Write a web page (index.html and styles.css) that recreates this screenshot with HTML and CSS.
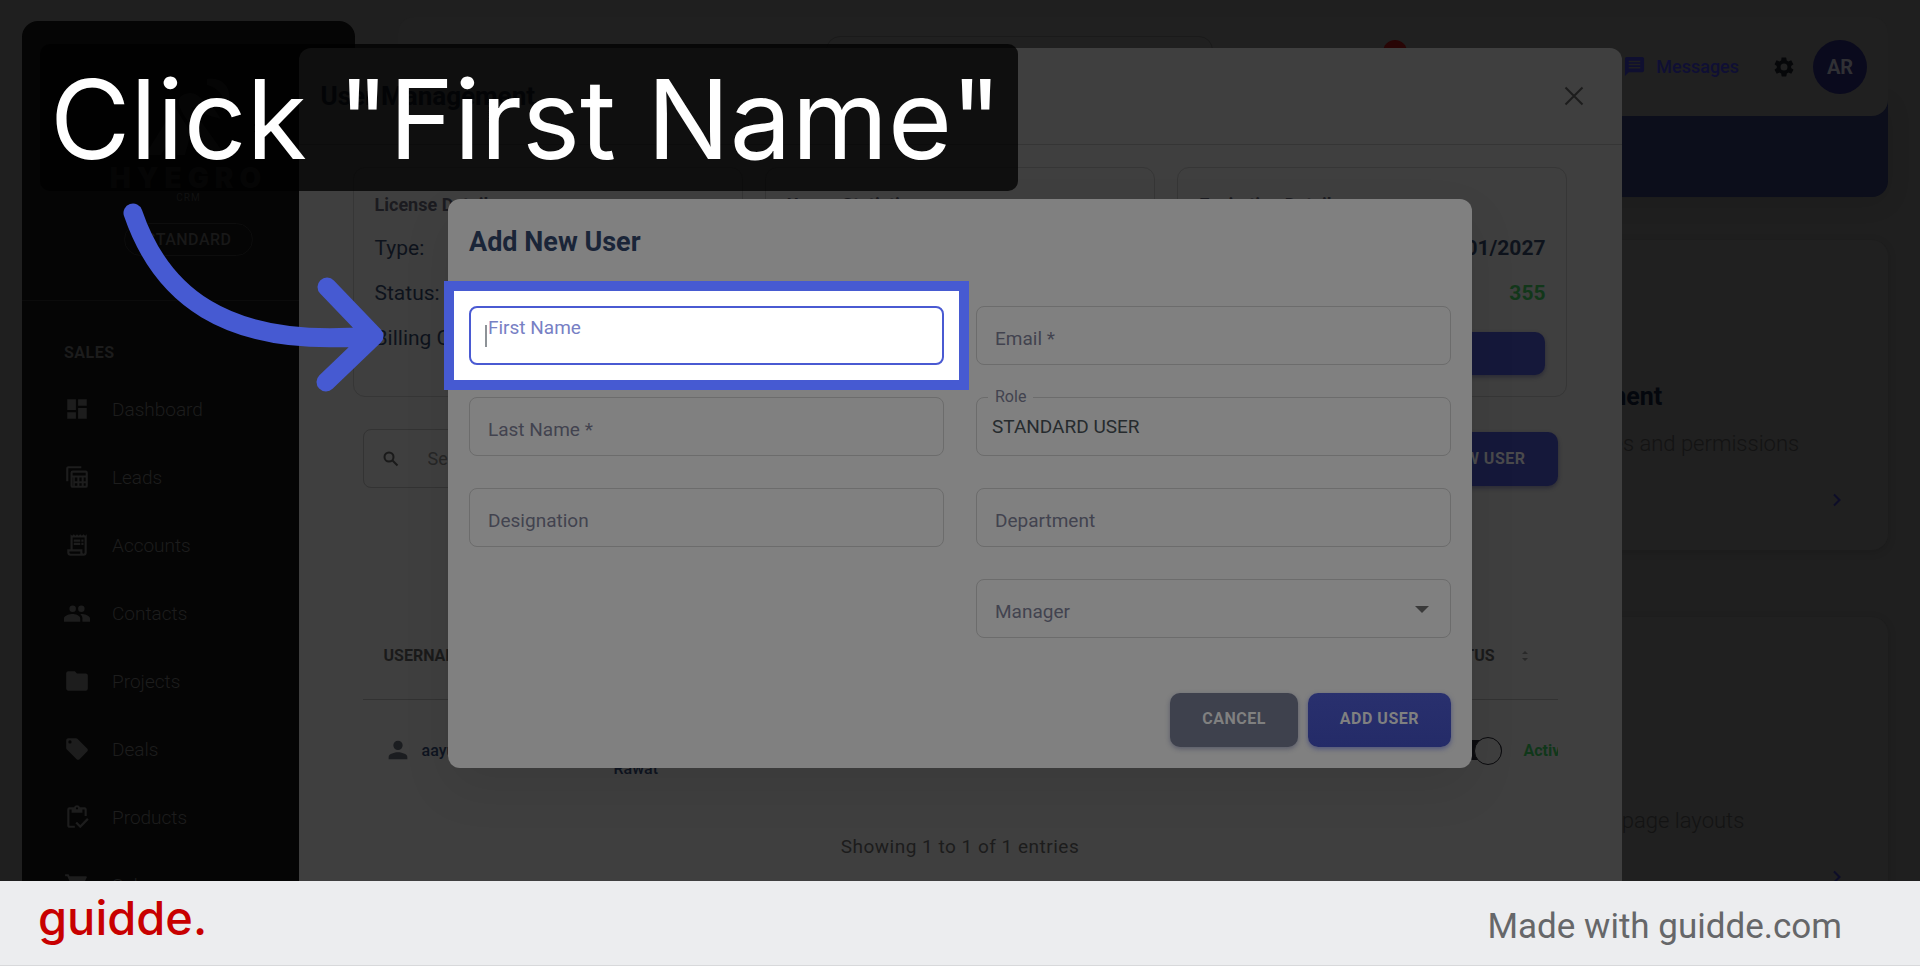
FILE: index.html
```html
<!DOCTYPE html>
<html lang="en">
<head>
    <meta charset="UTF-8">
    <meta name="viewport" content="width=device-width, initial-scale=1.0">
    <title>Add New User</title>
    <link rel="stylesheet" href="styles.css">
</head>
<body>

    <div class="stage">

        <!-- CRM page in the background -->
        <div class="app">
            <aside class="sidebar">
                <div class="brand">
                    <svg class="brand-mark" width="96" height="80" viewBox="0 0 96 80">
                        <path d="M4 78L34 30l16 26-6 22h-8l-4-20-12 20zM50 30l34 48H70L44 40c-8-12-10-22 4-24 12-1 14 12 24 14l8 12-14-4zM66 2c20-4 30 18 16 34 4-14-2-24-16-28z"/>
                    </svg>
                    <div class="brand-name">HYEGRO</div>
                    <div class="brand-sub">CRM</div>
                    <div class="plan">STANDARD</div>
                </div>
                <nav class="menu">
                    <div class="menu-title">SALES</div>
                    <a href="#"><svg viewBox="0 0 24 24"><path d="M3 13h8V3H3v10zm0 8h8v-6H3v6zm10 0h8V11h-8v10zm0-18v6h8V3h-8z"/></svg>Dashboard</a>
                    <a href="#"><svg viewBox="0 0 24 24"><path d="M4 16V4h12V2H4a2 2 0 0 0-2 2v12zM20 6H8a2 2 0 0 0-2 2v12c0 1.100.900 2 2 2h12a2 2 0 0 0 2-2V8a2 2 0 0 0-2-2zm0 2v2.500H8V8zm-7.700 8h-2.300v-3.500h2.300zm1.900-3.500h2.100V16h-2.100zM8 12.500h.5V20H8zm2 5.300h2.300V20H10zm4.200 2.200v-2.200h2.100V20zm4-2.200H20V20h-1.800zm1.800-1.800h-1.800v-3.500H20z"/></svg>Leads</a>
                    <a href="#"><svg viewBox="0 0 24 24"><path d="M19.500 3.500L18 2l-1.500 1.500L15 2l-1.500 1.500L12 2l-1.500 1.500L9 2 7.500 3.500 6 2v14H3v3a3 3 0 0 0 3 3h12a3 3 0 0 0 3-3V2zM15 20H6a1 1 0 0 1-1-1v-1h10zm4-1a1 1 0 0 1-2 0v-3H8V5h11zM9 7h6v2H9zm7 0h2v2h-2zm-7 3h6v2H9zm7 0h2v2h-2z"/></svg>Accounts</a>
                    <a href="#"><svg viewBox="0 0 24 24"><path d="M16 11a3 3 0 1 0 0-6 3 3 0 0 0 0 6zm-8 0a3 3 0 1 0 0-6 3 3 0 0 0 0 6zm0 2c-2.300 0-8 1.200-8 4v3h15v-3c0-2.800-4.700-4-7-4zm8 0l-1 .1c1.200.8 2 2 2 3.900v3h7v-3c0-2.800-5.700-4-8-4z"/></svg>Contacts</a>
                    <a href="#"><svg viewBox="0 0 24 24"><path d="M10 3H4a2 2 0 0 0-2 2v14c0 1.100.9 2 2 2h16a2 2 0 0 0 2-2V7a2 2 0 0 0-2-2h-8z"/></svg>Projects</a>
                    <a href="#"><svg viewBox="0 0 24 24"><path fill-rule="evenodd" d="M21.400 11.600l-9-9A2 2 0 0 0 11 2H4a2 2 0 0 0-2 2v7c0 .6.200 1 .6 1.400l9 9c.8.800 2 .800 2.800 0l7-7c.8-.8.8-2 0-2.800zM5.500 7a1.500 1.500 0 1 1 0-3 1.500 1.500 0 0 1 0 3z"/></svg>Deals</a>
                    <a href="#"><svg viewBox="0 0 24 24"><path d="M5 5h2v3h10V5h2v6h2V5a2 2 0 0 0-2-2h-4.200a3 3 0 0 0-5.600 0H5a2 2 0 0 0-2 2v15c0 1.100.9 2 2 2h5v-2H5zm7-2a1 1 0 1 1 0 2 1 1 0 0 1 0-2zM21.300 13l-6.300 6.300-3-3-1.500 1.500L15 22.300l7.800-7.800z"/></svg>Products</a>
                    <a href="#"><svg viewBox="0 0 24 24"><path d="M7 18a2 2 0 1 0 0 4 2 2 0 0 0 0-4zM1 2v2h2l3.600 7.600L5 15c0 1 1 2 2 2h12v-2H7.500l1-2H16c.7 0 1.400-.4 1.700-1L21 5c.4-.6-.2-1-1-1H5.200l-1-2zm16 16a2 2 0 1 0 0 4 2 2 0 0 0 0-4z"/></svg>Sales</a>
                </nav>
            </aside>

            <main class="content">
                <header class="topbar">
                    <div class="top-search"></div>
                    <div class="top-badge"></div>
                    <a class="messages" href="#">
                        <svg width="23" height="23" viewBox="0 0 24 24"><path d="M20 2H4a2 2 0 0 0-2 2v18l4-4h14a2 2 0 0 0 2-2V4a2 2 0 0 0-2-2zM6 6h12v1.500H6zm0 3.200h12v1.600H6zm0 3.300h12V14H6z" fill-rule="evenodd"/></svg>
                        Messages
                    </a>
                    <svg class="gear" width="24" height="24" viewBox="0 0 24 24"><path fill-rule="evenodd" d="M19.100 12.900a7 7 0 0 0 0-1.800l2-1.600c.2-.1.300-.4.100-.6l-1.900-3.300c-.1-.2-.4-.3-.6-.2l-2.400 1a7 7 0 0 0-1.600-1l-.4-2.500a.5.500 0 0 0-.5-.4h-3.800c-.2 0-.4.2-.5.4l-.3 2.500a7 7 0 0 0-1.700 1l-2.400-1c-.2-.1-.4 0-.6.200L2.700 8.900c-.1.200-.1.500.1.600l2 1.600a7 7 0 0 0 0 1.800l-2 1.600c-.2.100-.3.400-.1.600l1.900 3.300c.1.200.4.300.6.200l2.400-1a7 7 0 0 0 1.600 1l.4 2.500c0 .2.200.4.500.4h3.800c.2 0 .5-.2.500-.4l.4-2.500a7 7 0 0 0 1.600-1l2.400 1c.2.100.5 0 .6-.2l1.900-3.300c.1-.2.100-.5-.1-.6zM12 15.500a3.500 3.500 0 1 1 0-7 3.500 3.500 0 0 1 0 7z"/></svg>
                    <div class="avatar">AR</div>
                </header>
                <div class="banner"></div>
                <section class="tile">
                    <h3>User Management</h3>
                    <p>Manage user roles and permissions</p>
                    <svg class="chevron" width="24" height="24" viewBox="0 0 24 24"><path d="M9 6.500l5.500 5.500L9 17.500"/></svg>
                </section>
                <section class="tile">
                    <h3>Layouts</h3>
                    <p>Configure record page layouts</p>
                    <svg class="chevron" width="24" height="24" viewBox="0 0 24 24"><path d="M9 6.500l5.500 5.500L9 17.500"/></svg>
                </section>
            </main>
        </div>

        <!-- User management panel -->
        <div class="overlay">
            <section class="panel">
                <header class="panel-head">
                    <h2>User Management</h2>
                    <button class="close" aria-label="Close">
                        <svg width="20" height="20" viewBox="0 0 20 20"><path d="M1.500 1.500l17 17M18.500 1.500l-17 17"/></svg>
                    </button>
                </header>
                <div class="cards">
                    <div class="card">
                        <h4>License Details</h4>
                        <div class="line"><span>Type:</span></div>
                        <div class="line"><span>Status:</span></div>
                        <div class="line"><span>Billing Cycle:</span></div>
                    </div>
                    <div class="card">
                        <h4>Usage Statistics</h4>
                    </div>
                    <div class="card">
                        <h4>Expiration Details</h4>
                        <div class="line"><span></span><b>31/01/2027</b></div>
                        <div class="line"><span></span><b class="green">355</b></div>
                        <button class="renew" aria-label="Renew"></button>
                    </div>
                </div>
                <div class="toolbar">
                    <label class="search">
                        <svg width="18" height="18" viewBox="0 0 18 18"><circle cx="7" cy="7" r="4.500"/><path d="M10.500 10.500l5 5"/></svg>
                        <input type="text" placeholder="Search users" aria-label="Search users">
                    </label>
                    <button class="btn new-user">ADD NEW USER</button>
                </div>
                <div class="table-wrap">
                    <table>
                        <thead>
                            <tr>
                                <th class="col-user">USERNAME</th>
                                <th class="col-name">NAME</th>
                                <th></th>
                                <th class="col-status">STATUS<svg class="sort" width="6" height="10" viewBox="0 0 6 10"><path d="M3 0l3 3H0zM3 10L0 7h6z"/></svg></th>
                            </tr>
                        </thead>
                        <tbody>
                            <tr>
                                <td><div class="user"><svg width="28" height="28" viewBox="0 0 24 24"><path d="M12 12a4 4 0 1 0 0-8 4 4 0 0 0 0 8zm0 2c-2.700 0-8 1.300-8 4v2h16v-2c0-2.700-5.300-4-8-4z"/></svg>aayush</div></td>
                                <td class="name">Aayush<br>Rawat</td>
                                <td></td>
                                <td><div class="status"><span class="switch"></span>Active</div></td>
                            </tr>
                        </tbody>
                    </table>
                </div>
                <p class="entries">Showing 1 to 1 of 1 entries</p>
            </section>
        </div>

        <!-- Add user dialog -->
        <div class="overlay">
            <form class="dialog">
                <h1>Add New User</h1>
                <div class="fields">
                    <div class="field focused">
                        <input type="text" id="first">
                        <label for="first">First Name</label>
                        <span class="caret"></span>
                    </div>
                    <div class="field">
                        <input type="email" id="email">
                        <label for="email">Email *</label>
                    </div>
                    <div class="field">
                        <input type="text" id="last">
                        <label for="last">Last Name *</label>
                    </div>
                    <div class="field filled">
                        <select id="role"><option>STANDARD USER</option></select>
                        <label for="role">Role</label>
                    </div>
                    <div class="field">
                        <input type="text" id="designation">
                        <label for="designation">Designation</label>
                    </div>
                    <div class="field">
                        <input type="text" id="department">
                        <label for="department">Department</label>
                    </div>
                    <div class="field manager">
                        <select id="manager"><option></option></select>
                        <label for="manager">Manager</label>
                        <svg class="arrow-down" width="14" height="7" viewBox="0 0 14 7"><path d="M0 0h14L7 7z"/></svg>
                    </div>
                </div>
                <div class="actions">
                    <button type="button" class="btn cancel">CANCEL</button>
                    <button type="button" class="btn add">ADD USER</button>
                </div>
            </form>
        </div>

        <!-- Step caption and pointer -->
        <div class="callout">Click "First Name"</div>
        <svg class="pointer" width="280" height="200" viewBox="0 0 280 200">
            <path d="M23 13C50 92 112 149 260 136M217 87l47 49-48 46"/>
        </svg>
    </div>

    <footer class="footer">
        <div class="logo">guidde.</div>
        <div class="made">Made with guidde.com</div>
    </footer>

</body>
</html>
```

FILE: styles.css
```css
* {
    box-sizing: border-box;
}

body {
    margin: 0;
    height: 100vh;
    display: flex;
    flex-direction: column;
    font-family: Roboto, sans-serif;
    font-size: 18px;
    background: #ffffff;
}

h1, h2, h3, h4, p {
    margin: 0;
}

a {
    text-decoration: none;
}

button, input, select {
    font-family: inherit;
    font-size: inherit;
}

.stage {
    position: relative;
    flex: 1;
    overflow: hidden;
    background: #1f1f1f;
}

/* background page */
.app {
    display: flex;
    gap: 43px;
    height: 100%;
    padding: 0 32px 0 22px;
}

.sidebar {
    flex: 0 0 333px;
    margin-top: 21px;
    border-radius: 16px 16px 0 0;
    background: #050505;
    overflow: hidden;
}

.brand {
    display: flex;
    flex-direction: column;
    align-items: center;
    padding: 56px 0 44px;
    border-bottom: 1px solid #0b0b0b;
}

.brand-mark {
    fill: #151515;
}

.brand-name {
    margin-top: 6px;
    font-family: Inter, sans-serif;
    font-size: 28px;
    line-height: 30px;
    font-weight: 900;
    letter-spacing: 6px;
    color: #181818;
}

.brand-sub {
    font-size: 10px;
    line-height: 10px;
    letter-spacing: 1px;
    color: #111111;
}

.plan {
    margin-top: 20px;
    padding: 0 20px;
    border: 1px solid #0d0d0d;
    border-radius: 17px;
    font-size: 16px;
    line-height: 31px;
    font-weight: 500;
    letter-spacing: 0.5px;
    color: #181818;
}

.menu {
    padding: 40px 42px 0;
}

.menu-title {
    margin-bottom: 10px;
    font-size: 16px;
    line-height: 24px;
    font-weight: 700;
    letter-spacing: 0.5px;
    color: #1c1c1c;
}

.menu a {
    display: flex;
    align-items: center;
    gap: 22px;
    height: 68px;
    font-size: 19px;
    font-weight: 300;
    color: #1d1d1d;
}

.menu svg {
    width: 26px;
    height: 26px;
    fill: #1d1d1d;
}

.content {
    flex: 1;
    padding-top: 17px;
}

.topbar {
    position: relative;
    display: flex;
    align-items: center;
    justify-content: flex-end;
    height: 99px;
    padding-right: 21px;
    border-radius: 16px;
    background: #202020;
}

.top-search {
    position: absolute;
    left: 428px;
    top: 19px;
    width: 387px;
    height: 60px;
    border: 1px solid #1a1a1a;
    border-radius: 14px;
}

.top-badge {
    position: absolute;
    left: 985px;
    top: 23px;
    width: 24px;
    height: 24px;
    border-radius: 50%;
    background: #280505;
}

.messages {
    display: flex;
    align-items: center;
    gap: 10px;
    margin-right: 33px;
    font-weight: 500;
    color: #0f0f34;
}

.messages svg {
    fill: #0f0f30;
}

.gear {
    margin-right: 17px;
    fill: #060709;
}

.avatar {
    width: 54px;
    height: 54px;
    border-radius: 50%;
    background: #0a0a1d;
    color: #303034;
    font-size: 20px;
    line-height: 54px;
    font-weight: 700;
    text-align: center;
}

.banner {
    height: 97px;
    margin-top: -16px;
    border-radius: 0 0 16px 16px;
    background: #0c0e1b;
    box-shadow: 0 6px 24px rgba(0, 0, 0, 0.1);
}

.tile {
    position: relative;
    width: 480px;
    height: 310px;
    margin: 43px 0 67px auto;
    padding: 140px 48px 0;
    border-radius: 16px;
    background: #202020;
    box-shadow: 0 2px 8px rgba(0, 0, 0, 0.15);
}

.tile h3 {
    font-size: 25px;
    line-height: 34px;
    font-weight: 700;
    color: #04070d;
}

.tile p {
    margin-top: 16px;
    font-size: 22px;
    line-height: 28px;
    font-weight: 300;
    white-space: nowrap;
    color: #131313;
}

.chevron {
    position: absolute;
    right: 39px;
    bottom: 38px;
    fill: none;
    stroke: #0d0d28;
    stroke-width: 2;
}

/* panel */
.overlay {
    position: absolute;
    inset: 0;
    display: flex;
    justify-content: center;
    align-items: flex-start;
}

.panel {
    width: 90%;
    max-width: 1323px;
    height: 900px;
    margin-top: 48px;
    border-radius: 12px;
    background: #3f3f3f;
}

.panel-head {
    display: flex;
    align-items: center;
    justify-content: space-between;
    height: 97px;
    padding: 0 38px 0 22px;
    border-bottom: 1px solid #353535;
}

.panel-head h2 {
    font-size: 26px;
    font-weight: 700;
    color: #0d121b;
}

.close {
    display: flex;
    padding: 0;
    border: 0;
    background: none;
}

.close svg {
    fill: none;
    stroke: #1c1c1c;
    stroke-width: 2;
}

.cards {
    display: flex;
    gap: 22px;
    padding: 22px 54px 32px;
}

.card {
    flex: 1;
    height: 230px;
    padding: 25px 21px 0;
    border: 1px solid #363636;
    border-radius: 12px;
}

.card h4 {
    margin-bottom: 9px;
    font-size: 18px;
    line-height: 24px;
    font-weight: 700;
    color: #1b1b20;
}

.line {
    display: flex;
    justify-content: space-between;
    font-size: 21px;
    line-height: 45px;
    color: #0e131c;
}

.line b {
    font-weight: 700;
}

.line .green {
    color: #12371a;
}

.renew {
    width: 100%;
    height: 43px;
    margin-top: 16px;
    border: 0;
    border-radius: 10px;
    background: #15183a;
    box-shadow: 0 2px 4px rgba(10, 10, 40, 0.4);
}

.toolbar {
    display: flex;
    align-items: center;
    justify-content: space-between;
    padding: 0 64px;
}

.search {
    display: flex;
    align-items: center;
    gap: 28px;
    width: 400px;
    height: 59px;
    padding: 0 18px;
    border: 1px solid #333333;
    border-radius: 8px;
}

.search svg {
    fill: none;
    stroke: #1a1a1a;
    stroke-width: 2;
}

.search input {
    min-width: 0;
    padding: 0;
    border: 0;
    outline: none;
    background: none;
}

.search input::placeholder {
    color: #262626;
}

.btn {
    height: 54px;
    padding: 0 32px 3px;
    border: 0;
    border-radius: 10px;
    font-size: 16px;
    font-weight: 700;
    letter-spacing: 0.5px;
}

.new-user {
    padding-bottom: 1px;
    background: #15183a;
    color: #4a4a4c;
    box-shadow: 0 2px 4px rgba(10, 10, 40, 0.4);
}

.table-wrap {
    margin: 125px 64px 0;
    overflow: hidden;
}

table {
    width: 100%;
    table-layout: fixed;
    border-collapse: collapse;
    font-size: 16px;
    text-align: left;
    white-space: nowrap;
}

th {
    height: 86px;
    padding: 0 21px;
    border-bottom: 1px solid #323232;
    font-weight: 700;
    color: #1a1a1a;
}

.col-user,
.col-name {
    width: 230px;
}

.col-status {
    width: 143px;
    padding-right: 0;
}

.sort {
    margin-left: 27px;
    fill: #292929;
}

td {
    height: 102px;
    padding: 0 21px;
    font-weight: 500;
    color: #0e1420;
}

.name {
    line-height: 38px;
}

.user,
.status {
    display: flex;
    align-items: center;
}

.user {
    gap: 10px;
}

.user svg {
    fill: #1b1d20;
}

.status {
    color: #10371a;
    font-weight: 700;
}

.switch {
    position: relative;
    flex: 0 0 66px;
    height: 20px;
    margin-right: 22px;
    border-radius: 10px;
    background: #0b0b0e;
}

.switch::after {
    content: "";
    position: absolute;
    right: 0;
    top: -3px;
    width: 26px;
    height: 26px;
    border: 1px solid #0b0b0e;
    border-radius: 50%;
    background: #3f3f3f;
}

.entries {
    margin-top: 34px;
    font-size: 19px;
    line-height: 24px;
    letter-spacing: 0.5px;
    text-align: center;
    color: #1c1c1c;
}

/* dialog */
.dialog {
    width: 90%;
    max-width: 1024px;
    margin-top: 199px;
    padding: 21px;
    border-radius: 12px;
    background: #808080;
    box-shadow: 0 20px 50px rgba(0, 0, 0, 0.08);
}

.dialog h1 {
    margin-bottom: 42px;
    font-size: 27px;
    line-height: 44px;
    font-weight: 700;
    color: #1a2538;
}

.fields {
    display: grid;
    grid-template-columns: 1fr 1fr;
    gap: 32px;
}

.manager {
    grid-column: 2;
}

.field {
    position: relative;
    height: 59px;
    z-index: 0;
    color: #42434f;
    font-size: 19px;
}

.field input,
.field select {
    display: block;
    width: 100%;
    height: 100%;
    padding: 0 15px;
    border: 1px solid #6c6c6c;
    border-radius: 8px;
    outline: none;
    background: transparent;
    appearance: none;
    color: #262b2e;
}

.field label {
    position: absolute;
    left: 19px;
    top: 21px;
    line-height: 24px;
    color: #42434f;
}

.field.filled label {
    left: 12px;
    top: -12px;
    padding: 0 7px;
    background: #808080;
    font-size: 16px;
}

/* highlighted frame around the active field */
.focused::before {
    content: "";
    position: absolute;
    z-index: -1;
    inset: -25px;
    border: 10px solid #465ad2;
    background: #ffffff;
}

.field.focused input {
    border: 2px solid #4a5ad2;
}

.field.focused label {
    top: 10px;
    color: #7780c4;
}

.caret {
    position: absolute;
    left: 16px;
    top: 19px;
    width: 2px;
    height: 22px;
    background: #8d9297;
}

.arrow-down {
    position: absolute;
    right: 22px;
    top: 27px;
    fill: #3a3a3a;
}

.actions {
    display: flex;
    justify-content: flex-end;
    gap: 10px;
    margin-top: 55px;
}

.cancel {
    background: #3e414d;
    color: #808080;
    box-shadow: 0 2px 5px rgba(30, 35, 70, 0.4);
}

.add {
    background: linear-gradient(#29306e, #242b68);
    color: #808080;
    box-shadow: 0 2px 5px rgba(30, 40, 120, 0.5);
}

/* caption */
.callout {
    position: absolute;
    left: 40px;
    top: 44px;
    padding: 4px 16px 0 10px;
    border-radius: 10px;
    background: rgba(0, 0, 0, 0.76);
    color: #ffffff;
    font-family: Inter, sans-serif;
    font-size: 110px;
    line-height: 143px;
    white-space: nowrap;
}

.pointer {
    position: absolute;
    left: 110px;
    top: 200px;
    fill: none;
    stroke: #465ad2;
    stroke-width: 19;
    stroke-linecap: round;
    stroke-linejoin: round;
}

/* bottom bar */
.footer {
    display: flex;
    align-items: center;
    justify-content: space-between;
    height: 85px;
    padding: 0 78px 0 38px;
    border-bottom: 1px solid #d8d9db;
    background: #ecedef;
}

.logo {
    padding-bottom: 10px;
    font-family: Inter, sans-serif;
    font-size: 47px;
    line-height: 56px;
    font-weight: 500;
    color: #c80000;
}

.made {
    padding-top: 8px;
    font-size: 35px;
    line-height: 42px;
    color: #666769;
}
```
